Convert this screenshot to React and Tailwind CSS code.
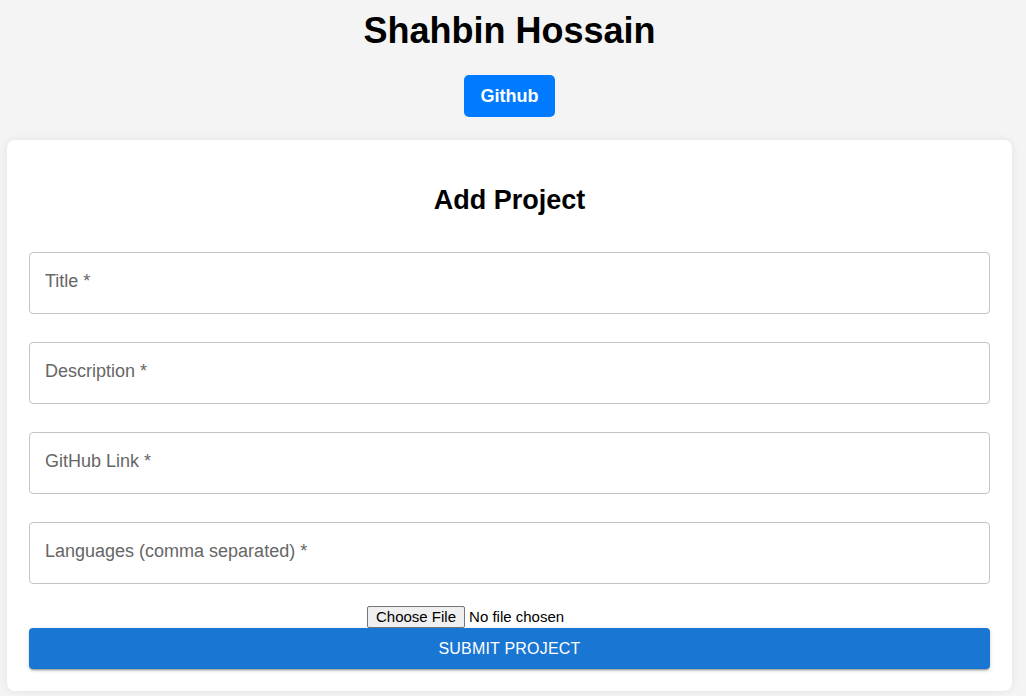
import React from 'react'

const Field = ({ label }) => (
  <div className="flex h-[62px] items-center rounded-[4px] border border-[#c4c4c4] px-[15px] pb-[4px]">
    <span className="text-[18px] text-[#666666]">{label}</span>
  </div>
)

export default function App() {
  return (
    <div className="min-h-[696px] bg-[#f4f4f4] font-['Liberation_Sans',Arial,sans-serif]">
      <div className="w-[1019px]">
        <div className="flex flex-col items-center">
          <h1 className="mt-[10px] text-[36px] font-bold leading-[42px] text-black">Shahbin Hossain</h1>
          <button className="mt-[23px] rounded-[5px] bg-[#007bff] px-[17px] py-[10px] text-[18px] font-bold leading-[22px] text-white">
            Github
          </button>
        </div>
        <div className="mx-[7px] mt-[23px] rounded-[8px] bg-white px-[22px] pb-[22px] pt-[44px] shadow-[0_0_8px_rgba(0,0,0,0.08)]">
          <h2 className="text-center text-[27px] font-bold leading-[32px] text-black">Add Project</h2>
          <div className="mt-[36px] flex flex-col gap-[28px]">
            <Field label="Title *" />
            <Field label="Description *" />
            <Field label="GitHub Link *" />
            <Field label="Languages (comma separated) *" />
          </div>
          <div className="mt-[21px] flex h-[23px] items-center justify-center">
            <input
              type="file"
              className="w-[285px] text-[15px] leading-[18px] text-black file:mr-[4px] file:rounded-[2px] file:border file:border-solid file:border-[#767676] file:bg-[#efefef] file:px-[8px] file:py-[1px] file:text-[15px] file:text-black"
            />
          </div>
          <button className="flex h-[41px] w-full items-center justify-center rounded-[4px] bg-[#1976d2] text-[16px] uppercase tracking-[0.2px] text-white shadow-[0_3px_1px_-2px_rgba(0,0,0,0.2),0_2px_2px_0_rgba(0,0,0,0.14),0_1px_5px_0_rgba(0,0,0,0.12)]">
            Submit Project
          </button>
        </div>
      </div>
    </div>
  )
}
